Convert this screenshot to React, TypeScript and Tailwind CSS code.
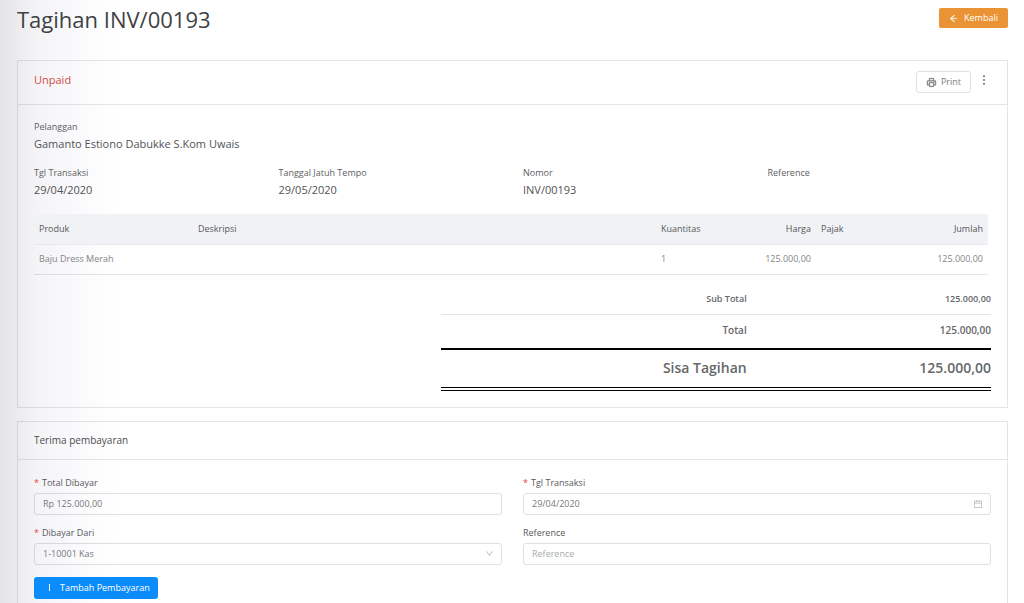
import { useState } from "react";
import {
  AiOutlineArrowLeft,
  AiOutlineCalendar,
  AiOutlineDown,
  AiOutlineMore,
  AiOutlinePrinter,
} from "react-icons/ai";

const invoice = {
  number: "INV/00193",
  status: "Unpaid",
  customer: "Gamanto Estiono Dabukke S.Kom Uwais",
  date: "29/04/2020",
  dueDate: "29/05/2020",
  reference: "",
  items: [
    {
      product: "Baju Dress Merah",
      description: "",
      qty: 1,
      price: "125.000,00",
      tax: "",
      amount: "125.000,00",
    },
  ],
  total: "125.000,00",
};

const inputClass =
  "block h-[22px] w-full rounded-[3px] border border-black/12 bg-transparent px-2 text-[9px] text-[#77797b] outline-none placeholder:text-[#a9abad] focus:border-[#0c8cfb]";

const Info = ({ label, value }: { label: string; value: string }) => (
  <div>
    <dt className="text-[9px] leading-4 text-[#5c5e60]">{label}</dt>
    <dd className="text-[11px] leading-[18px] text-[#515355]">{value}</dd>
  </div>
);

const Label = ({
  id,
  text,
  required,
}: {
  id: string;
  text: string;
  required?: boolean;
}) => (
  <label htmlFor={id} className="mb-0.5 block text-[9px] leading-4 text-[#56585a]">
    {required && <span className="mr-[3px] text-[#e8453c]">*</span>}
    {text}
  </label>
);

const App = () => {
  const [form, setForm] = useState({
    amount: "Rp 125.000,00",
    date: "29/04/2020",
    account: "1-10001 Kas",
    reference: "",
  });

  return (
    <main className="min-h-screen bg-white bg-[linear-gradient(to_right,#e4e4e7_0px,#ebebee_15px,#f4f4f7_36px,#fafafc_76px,#ffffff_118px)] pt-2 pr-4 pb-4 pl-[17px] font-['Open_Sans',sans-serif]">
      <div className="flex items-start justify-between">
        <h1 className="text-[22px] leading-[22px] text-[#3f4143]">
          Tagihan {invoice.number}
        </h1>
        <button className="flex h-5 items-center gap-1.5 rounded-xs bg-[#e99334] px-2.5 text-[9px] font-medium text-white">
          <AiOutlineArrowLeft size={9} strokeWidth={40} />
          Kembali
        </button>
      </div>

      <section className="mt-[30px] border border-black/10">
        <div className="flex h-11 items-start justify-between border-b border-black/10 px-4 pt-2.5">
          <span className="text-[11px] leading-[18px] text-[#cf4a48]">
            {invoice.status}
          </span>
          <div className="flex items-start gap-1.5">
            <button className="flex h-[22px] items-center gap-1 rounded-[3px] border border-black/12 px-[9px] text-[9px] text-[#77797b]">
              <AiOutlinePrinter size={11} strokeWidth={30} />
              Print
            </button>
            <button aria-label="More" className="pt-0.5 text-[#56585a]">
              <AiOutlineMore size={14} strokeWidth={30} />
            </button>
          </div>
        </div>

        <div className="px-4 pt-3.5 pb-4">
          <dl className="grid grid-cols-4 gap-x-[21px] gap-y-3">
            <div className="col-span-4">
              <Info label="Pelanggan" value={invoice.customer} />
            </div>
            <Info label="Tgl Transaksi" value={invoice.date} />
            <Info label="Tanggal Jatuh Tempo" value={invoice.dueDate} />
            <Info label="Nomor" value={invoice.number} />
            <Info label="Reference" value={invoice.reference} />
          </dl>

          <div className="mt-[15px] pr-[3px]">
            <table className="w-full table-fixed text-left text-[9px]">
              <thead className="bg-[#f1f2f6] text-[#56585a]">
                <tr className="h-[30px] border-b border-[#e8e9ec]">
                  <th className="w-1/6 px-[5px] font-normal">Produk</th>
                  <th className="px-[5px] font-normal">Deskripsi</th>
                  <th className="w-20 px-[5px] font-normal">Kuantitas</th>
                  <th className="w-20 px-[5px] text-right font-normal">Harga</th>
                  <th className="w-20 px-[5px] font-normal">Pajak</th>
                  <th className="w-[92px] px-[5px] text-right font-normal">Jumlah</th>
                </tr>
              </thead>
              <tbody className="text-[#838587]">
                {invoice.items.map((item, index) => (
                  <tr key={index} className="h-[30px] border-b border-black/10">
                    <td className="px-[5px]">{item.product}</td>
                    <td className="px-[5px]">{item.description}</td>
                    <td className="px-[5px]">{item.qty}</td>
                    <td className="px-[5px] text-right">{item.price}</td>
                    <td className="px-[5px]">{item.tax}</td>
                    <td className="px-[5px] text-right">{item.amount}</td>
                  </tr>
                ))}
              </tbody>
            </table>
          </div>

          <table className="mt-2 ml-auto w-[57.5%] table-fixed text-right text-[#66686a]">
            <tbody>
              <tr className="h-8 border-b border-black/10 text-[9px]">
                <th className="w-[55.6%] font-semibold">Sub Total</th>
                <td className="font-semibold">{invoice.total}</td>
              </tr>
              <tr className="h-[34px] border-b-2 border-black text-[10px]">
                <th className="pb-0.5 font-semibold">Total</th>
                <td className="pb-0.5 font-semibold">{invoice.total}</td>
              </tr>
              <tr className="h-10 border-b-4 border-double border-black text-[14px]">
                <th className="pb-0.5 font-semibold">Sisa Tagihan</th>
                <td className="pb-0.5 font-semibold">{invoice.total}</td>
              </tr>
            </tbody>
          </table>
        </div>
      </section>

      <section className="mt-[13px] border border-black/10">
        <h2 className="flex h-[38px] items-center border-b border-black/10 px-4 text-[10px] text-[#4b4d4f]">
          Terima pembayaran
        </h2>
        <form className="px-4 pt-[15px] pb-4" onSubmit={(e) => e.preventDefault()}>
          <div className="grid grid-cols-2 gap-x-[21px] gap-y-2.5">
            <div>
              <Label id="amount" text="Total Dibayar" required />
              <input
                id="amount"
                className={inputClass}
                value={form.amount}
                onChange={(e) => setForm({ ...form, amount: e.target.value })}
              />
            </div>
            <div>
              <Label id="date" text="Tgl Transaksi" required />
              <div className="relative">
                <input
                  id="date"
                  className={inputClass}
                  value={form.date}
                  onChange={(e) => setForm({ ...form, date: e.target.value })}
                />
                <AiOutlineCalendar
                  size={10}
                  className="pointer-events-none absolute top-1.5 right-2 text-[#b4b6b8]"
                />
              </div>
            </div>
            <div>
              <Label id="account" text="Dibayar Dari" required />
              <div className="relative">
                <select
                  id="account"
                  className={`${inputClass} appearance-none`}
                  value={form.account}
                  onChange={(e) => setForm({ ...form, account: e.target.value })}
                >
                  <option>1-10001 Kas</option>
                </select>
                <AiOutlineDown
                  size={9}
                  className="pointer-events-none absolute top-1.5 right-2 text-[#b4b6b8]"
                />
              </div>
            </div>
            <div>
              <Label id="reference" text="Reference" />
              <input
                id="reference"
                className={inputClass}
                placeholder="Reference"
                value={form.reference}
                onChange={(e) => setForm({ ...form, reference: e.target.value })}
              />
            </div>
          </div>
          <button className="mt-3 flex h-[22px] items-center gap-1.5 rounded-[3px] bg-[#0c8cfb] pr-2 pl-[11px] text-[9px] font-medium text-white">
            <svg width="9" height="9" viewBox="0 0 9 9" fill="none" aria-hidden="true">
              <path d="M4.5 1v7" stroke="currentColor" />
            </svg>
            Tambah Pembayaran
          </button>
        </form>
      </section>
    </main>
  );
};

export default App;
